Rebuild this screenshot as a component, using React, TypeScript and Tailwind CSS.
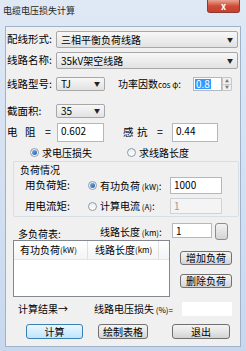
import React from 'react';

function Combo({ className, text }: { className: string; text: string }) {
  return (
    <div className={`flex items-center justify-between rounded-[2px] border border-[#a7a7a7] bg-gradient-to-b from-[#f7f7f7] to-[#e2e2e2] pl-[4px] pr-[4px] ${className}`}>
      <span className="text-[10px] leading-none text-black">{text}</span>
      <span className="text-[6px] leading-none text-[#222]">▼</span>
    </div>
  );
}

function TextBox({ className, text, disabled }: { className: string; text?: string; disabled?: boolean }) {
  return (
    <div
      className={`flex items-start border border-[#b3b8c0] pl-[3px] pt-[2px] text-[10px] leading-none ${
        disabled ? 'bg-[#f4f4f4] text-[#9a9a9a] border-[#cfd3d8]' : 'bg-white text-black'
      } ${className}`}
    >
      {text}
    </div>
  );
}

function Radio({ checked, label }: { checked?: boolean; label: React.ReactNode }) {
  return (
    <div className="flex items-center gap-[3px]">
      <span className="flex h-[9px] w-[9px] items-center justify-center rounded-full border border-[#8d9aaa] bg-gradient-to-b from-[#e9ecef] to-[#ffffff]">
        {checked && <span className="h-[5px] w-[5px] rounded-full bg-gradient-to-br from-[#7db3e8] to-[#1d5aa8]" />}
      </span>
      <span className="text-[10px] leading-none text-black">{label}</span>
    </div>
  );
}

function Btn({ className, text, primary }: { className: string; text: string; primary?: boolean }) {
  return (
    <div
      className={`flex items-center justify-center rounded-[3px] border text-[10px] leading-none text-black ${
        primary
          ? 'border-[#3c7fb1] bg-gradient-to-b from-[#eaf6fd] to-[#bee6fd]'
          : 'border-[#707070] bg-gradient-to-b from-[#f4f4f4] via-[#e6e6e6] to-[#d3d3d3]'
      } ${className}`}
    >
      {text}
    </div>
  );
}

const small = 'text-[8px]';

export default function App() {
  return (
    <div className="flex h-[351px] w-[246px] flex-col bg-gradient-to-b from-[#dfe9f5] to-[#c7d8ee] font-['Noto_Sans_CJK_SC',sans-serif] text-black">
      {/* title bar */}
      <div className="flex h-[26px] items-start justify-between">
        <span className="ml-[3px] mt-[6px] text-[9px] leading-none text-[#1e1e1e]">电缆电压损失计算</span>
        <div className="mr-[6px] flex h-[13px] w-[33px] items-center justify-center rounded-b-[3px] border border-t-0 border-[#8a3b36] bg-gradient-to-b from-[#e8a493] via-[#cf4a37] to-[#c7402e]">
          <span className="text-[9px] font-bold leading-none text-white">x</span>
        </div>
      </div>

      {/* client area */}
      <div className="mx-[5px] mb-[4px] flex flex-1 flex-col border border-[#9fb2c9] bg-[#f0f0f0]">
        <div className="mt-[4px] flex h-[17px] items-center pl-[1px]">
          <span className="w-[49px] text-[10.5px] leading-none">配线形式:</span>
          <Combo className="h-[17px] w-[182px]" text="三相平衡负荷线路" />
        </div>
        <div className="mt-[4px] flex h-[17px] items-center pl-[1px]">
          <span className="w-[49px] text-[10.5px] leading-none">线路名称:</span>
          <Combo className="h-[17px] w-[182px]" text="35kV架空线路" />
        </div>
        <div className="mt-[8px] flex h-[14px] items-center pl-[1px]">
          <span className="w-[49px] text-[10.5px] leading-none">线路型号:</span>
          <Combo className="h-[14px] w-[49px]" text="TJ" />
          <span className="ml-[13px] w-[75px] text-[10px] leading-none">
            功率因数<span className={small}>cos φ</span>:
          </span>
          <div className="flex h-[14px] w-[29px] items-center border border-[#b3b8c0] bg-white pl-[1px]">
            <span className="bg-[#3399ff] px-[1px] text-[10px] leading-none text-white">0.8</span>
          </div>
          <div className="flex h-[14px] w-[10px] flex-col">
            <div className="flex flex-1 items-center justify-center rounded-tr-[2px] border border-[#c6c6c6] bg-[#f0f0f0] text-[4px] leading-none text-[#777]">▲</div>
            <div className="flex flex-1 items-center justify-center rounded-br-[2px] border border-t-0 border-[#c6c6c6] bg-[#f0f0f0] text-[4px] leading-none text-[#777]">▼</div>
          </div>
        </div>
        <div className="mt-[13px] flex h-[14px] items-center pl-[1px]">
          <span className="w-[49px] text-[10.5px] leading-none">截面积:</span>
          <Combo className="h-[14px] w-[49px]" text="35" />
        </div>
        <div className="mt-[5px] flex h-[19px] items-center pl-[1px]">
          <span className="flex w-[50px] text-[10.5px] leading-none">
            <span className="w-[18px]">电</span>
            <span className="w-[20px]">阻</span>
            <span>=</span>
          </span>
          <TextBox className="h-[19px] w-[47px]" text="0.602" />
          <span className="ml-[19px] flex w-[49px] text-[10.5px] leading-none">
            <span className="w-[14px]">感</span>
            <span className="w-[20px]">抗</span>
            <span>=</span>
          </span>
          <TextBox className="h-[19px] w-[46px]" text="0.44" />
        </div>
        <div className="mt-[5px] flex h-[11px] items-center pl-[24px]">
          <div className="w-[97px]">
            <Radio checked label="求电压损失" />
          </div>
          <Radio label="求线路长度" />
        </div>

        {/* group box */}
        <div className="ml-[7px] mt-[3px] flex h-[56px] w-[226px] flex-col rounded-[2px] border border-[#d5dfe5]">
          <span className="ml-[6px] mt-[3px] h-[12px] text-[10px] leading-none">负荷情况</span>
          <div className="flex h-[17px] items-center pl-[11px]">
            <span className="w-[63px] text-[10.5px] leading-none">用负荷矩:</span>
            <div className="w-[82px]">
              <Radio checked label={<>有功负荷<span className={small}> (kW)</span>:</>} />
            </div>
            <TextBox className="h-[17px] w-[52px]" text="1000" />
          </div>
          <div className="mt-[4px] flex h-[16px] items-center pl-[11px]">
            <span className="w-[63px] text-[10.5px] leading-none">用电流矩:</span>
            <div className="w-[82px]">
              <Radio label={<>计算电流<span className={small}> (A)</span>:</>} />
            </div>
            <TextBox className="h-[16px] w-[52px]" text="1" disabled />
          </div>
        </div>

        <div className="mt-[6px] flex h-[17px] items-center pl-[12px]">
          <span className="w-[82px] pt-[4px] text-[10px] leading-none">多负荷表:</span>
          <span className="w-[72px] text-[10px] leading-none">
            线路长度<span className={small}> (km)</span>:
          </span>
          <TextBox className="h-[15px] w-[40px] self-start" text="1" />
          <div className="ml-[3px] h-[17px] w-[13px] rounded-[3px] border border-[#8c8c8c] bg-gradient-to-b from-[#f2f2f2] to-[#d4d4d4]" />
        </div>

        <div className="flex">
          <div className="ml-[7px] flex h-[57px] w-[157px] flex-col border border-[#828790] bg-white">
            <div className="flex h-[19px] items-center border-b border-[#e5e5e5] bg-gradient-to-b from-[#ffffff] to-[#f3f4f6] text-[10px] leading-none">
              <span className="flex h-full w-[74px] items-center border-r border-[#e0e0e0] pl-[6px]">
                有功负荷<span className={small}> (kW)</span>
              </span>
              <span className="flex h-full w-[71px] items-center border-r border-[#e0e0e0] pl-[7px]">
                线路长度<span className={small}> (km)</span>
              </span>
            </div>
          </div>
          <div className="ml-[10px] flex flex-col">
            <Btn className="mt-[11px] h-[14px] w-[52px]" text="增加负荷" />
            <Btn className="mt-[9px] h-[14px] w-[52px]" text="删除负荷" />
          </div>
        </div>

        <div className="mt-[5px] flex h-[14px] items-center pl-[12px]">
          <span className="w-[76px] text-[10px] leading-none">计算结果→</span>
          <span className="w-[88px] text-[10px] leading-none">
            线路电压损失<span className={small}> (%)=</span>
          </span>
          <div className="h-[14px] w-[50px] bg-white" />
        </div>

        <div className="mt-[8px] flex h-[15px] items-center pl-[20px]">
          <Btn className="h-[15px] w-[57px]" text="计算" primary />
          <Btn className="ml-[15px] h-[15px] w-[50px]" text="绘制表格" />
          <Btn className="ml-[24px] h-[15px] w-[58px]" text="退出" />
        </div>
      </div>
    </div>
  );
}
